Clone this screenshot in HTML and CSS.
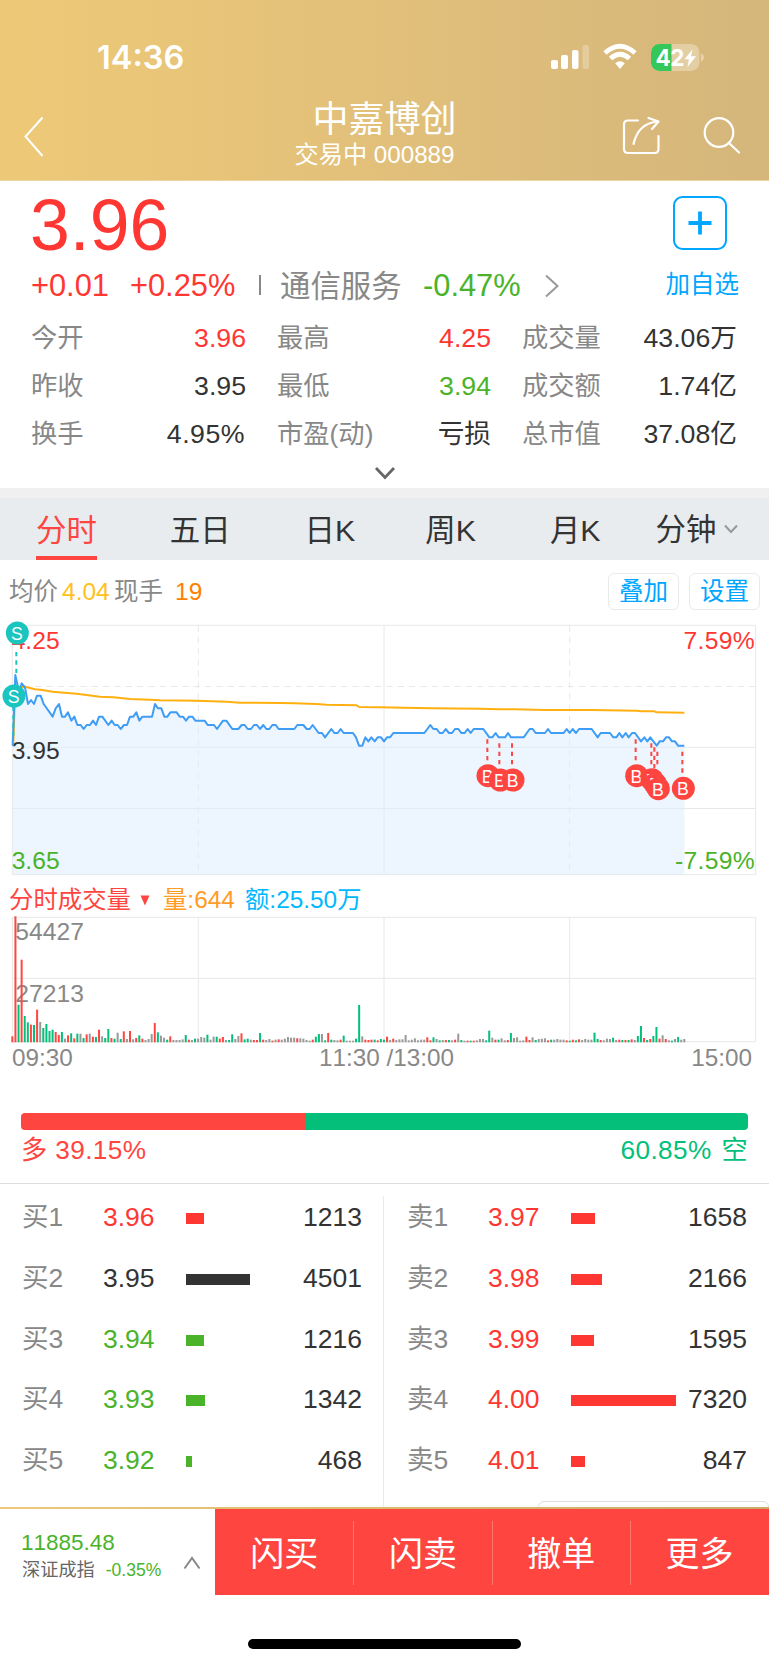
FILE: index.html
```html
<!DOCTYPE html>
<html lang="zh-CN">
<head>
<meta charset="utf-8">
<title>中嘉博创 000889</title>
<link rel="stylesheet" href="styles.css">
</head>
<body>
<header class="header">
  <div class="status">
    <span class="time">14:36</span>
    <svg class="status-icons" width="156" height="30" viewBox="0 0 156 30" fill="#fff">
      <rect x="2" y="17" width="7" height="9" rx="2"/>
      <rect x="12" y="12" width="7" height="14" rx="2"/>
      <rect x="23" y="7" width="6.5" height="19" rx="2"/>
      <rect x="33.500" y="2" width="6.500" height="24" rx="2" opacity=".25"/>
      <g fill="none" stroke="#fff" stroke-width="5">
        <path d="M56 10 Q71 -3.500 86 10"/>
        <path d="M61.500 15.500 Q71 7 80.500 15.500"/>
      </g>
      <path d="M66.200 20.300 Q71 16 75.800 20.300 L71 26z"/>
      <rect x="102" y="1" width="48.500" height="27" rx="8.500" opacity=".32"/>
      <path d="M110.500 1 H122.500 V28 H110.500 A8.500 8.500 0 0 1 102 19.500 V9.500 A8.500 8.500 0 0 1 110.500 1z" fill="#34c759"/>
      <path d="M152 10.500 q2.800 1 2.800 4 t-2.800 4z" opacity=".4"/>
      <text class="battery" x="106.500" y="22.500">42</text>
      <path d="M143.500 6.500 L135.500 16.200 H140 L138.500 24 L147 13.300 H142z"/>
    </svg>
  </div>
  <nav class="navbar">
    <svg class="back" width="20" height="42" viewBox="0 0 20 42"><path d="M18.500 1.500 L1.500 20.500 L18.500 40"/></svg>
    <div class="heading">
      <h1 class="name">中嘉博创</h1>
      <p class="code">交易中 000889</p>
    </div>
    <svg class="nav-icons" width="120" height="42" viewBox="0 0 120 42">
      <path d="M17 4.500 H7 Q3 4.500 3 8.500 V33 Q3 37 7 37 H33.500 Q37.500 37 37.500 33 V20"/>
      <path d="M12.500 28 C15 17 21 7 36.500 5.500 M27.500 2 L37.500 5.500 L31 13"/>
      <circle cx="98" cy="16.500" r="14.300"/>
      <path d="M108 27 L118 36.500"/>
    </svg>
  </nav>
</header>

<section class="quote">
  <div class="quote-top">
    <div class="price">3.96</div>
    <svg class="plus" width="54" height="54" viewBox="0 0 54 54"><rect x="1" y="1" width="52" height="52" rx="8.500" stroke-width="2"/><path d="M15.500 27 H38.500 M27 15.500 V38.500" stroke-width="3.800"/></svg>
  </div>
  <div class="change">
    <span class="delta">+0.01</span><span class="pct">+0.25%</span><i class="bar"></i><span class="sector">通信服务</span><span class="sector-pct">-0.47%</span>
    <svg class="more" width="16" height="24" viewBox="0 0 16 24"><path d="M2 1.500 L13.500 12 L2 22.500"/></svg>
    <a class="add">加自选</a>
  </div>
  <dl class="stats">
    <div><dt>今开</dt><dd class="up">3.96</dd></div>
    <div><dt>最高</dt><dd class="up">4.25</dd></div>
    <div><dt>成交量</dt><dd>43.06万</dd></div>
    <div><dt>昨收</dt><dd>3.95</dd></div>
    <div><dt>最低</dt><dd class="down">3.94</dd></div>
    <div><dt>成交额</dt><dd>1.74亿</dd></div>
    <div><dt>换手</dt><dd class="rate">4.95%</dd></div>
    <div><dt>市盈(动)</dt><dd>亏损</dd></div>
    <div><dt>总市值</dt><dd>37.08亿</dd></div>
  </dl>
  <svg class="expand" width="24" height="16" viewBox="0 0 24 16"><path d="M3 2 L12 11.500 L21 2"/></svg>
</section>

<nav class="tabs">
  <a class="tab active">分时</a><a class="tab">五日</a><a class="tab">日K</a><a class="tab">周K</a><a class="tab">月K</a>
  <a class="tab last">分钟<svg width="16" height="10" viewBox="0 0 16 10"><path d="M2 1.500 L8 8 L14 1.500"/></svg></a>
</nav>

<section class="info">
  <span class="grey">均价</span><span class="avg">4.04</span><span class="grey">现手</span><span class="hand">19</span>
  <button class="btn">叠加</button><button class="btn">设置</button>
</section>

<svg class="price-chart" width="769" height="266" viewBox="0 0 2307 798">
  <g class="grid">
    <path d="M37 46 H2267 V794 H37z M37 412 H2267 M37 595.500 H2267 M1152 46 V794"/>
    <path class="dashed" d="M37 229.500 H2267 M595 46 V794 M1709 46 V794"/>
  </g>
  <polygon id="area" class="area"/>
  <text class="label up" x="35" y="117">4.25</text>
  <text class="label up end" x="2265" y="117">7.59%</text>
  <text class="label" x="35" y="446">3.95</text>
  <text class="label down" x="35" y="777">3.65</text>
  <text class="label down end" x="2265" y="777">-7.59%</text>
  <polyline id="average" class="average"/>
  <polyline id="line" class="line"/>
  <g id="marks"></g>
</svg>

<section class="volume-title">
  <span class="vt">分时成交量</span><svg width="10" height="11" viewBox="0 0 10 11"><path d="M.5 .5 H9.500 L5 10.500z" fill="#ff4540"/></svg><span class="vq">量:644</span><span class="va">额:25.50万</span>
</section>
<svg class="volume-chart" width="769" height="128" viewBox="0 0 2307 384">
  <path class="grid" d="M37 4 H2267 V377 H37z M37 187 H2267 M595 4 V377 M1152 4 V377 M1709 4 V377"/>
  <text class="label vol" x="46" y="73">54427</text>
  <text class="label vol" x="46" y="257">27213</text>
  <g id="bars"></g>
</svg>
<div class="axis"><span>09:30</span><span class="mid">11:30 /13:00</span><span>15:00</span></div>

<section class="ratio">
  <div class="ratio-bar"><i class="long" style="width:39.15%"></i><i class="short"></i></div>
  <div class="ratio-text"><span class="long-text">多 39.15%</span><span class="short-text">60.85% 空</span></div>
</section>

<section class="book">
  <div class="side">
    <div class="row up"><span class="lv">买1</span><span>3.96</span><i style="width:18px"></i><b>1213</b></div>
    <div class="row"><span class="lv">买2</span><span>3.95</span><i style="width:64px"></i><b>4501</b></div>
    <div class="row down"><span class="lv">买3</span><span>3.94</span><i style="width:18px"></i><b>1216</b></div>
    <div class="row down"><span class="lv">买4</span><span>3.93</span><i style="width:19px"></i><b>1342</b></div>
    <div class="row down"><span class="lv">买5</span><span>3.92</span><i style="width:6px"></i><b>468</b></div>
  </div>
  <div class="side sell">
    <div class="row up"><span class="lv">卖1</span><span>3.97</span><i style="width:24px"></i><b>1658</b></div>
    <div class="row up"><span class="lv">卖2</span><span>3.98</span><i style="width:31px"></i><b>2166</b></div>
    <div class="row up"><span class="lv">卖3</span><span>3.99</span><i style="width:23px"></i><b>1595</b></div>
    <div class="row up"><span class="lv">卖4</span><span>4.00</span><i style="width:105px"></i><b>7320</b></div>
    <div class="row up"><span class="lv">卖5</span><span>4.01</span><i style="width:14px"></i><b>847</b></div>
  </div>
  <div class="sheet"></div>
</section>

<footer class="footer">
  <div class="index">
    <div>
      <div class="index-value">11885.48</div>
      <div class="index-name">深证成指<span>-0.35%</span></div>
    </div>
    <svg width="18" height="14" viewBox="0 0 18 14"><path d="M1.500 12.500 L9 2 L16.500 12.500"/></svg>
  </div>
  <div class="actions"><a>闪买</a><a>闪卖</a><a>撤单</a><a>更多</a></div>
</footer>
<div class="home"></div>
<script src="script.js"></script>
</body>
</html>
```
FILE: styles.css
```css
* { box-sizing: border-box; margin: 0; padding: 0; }
body {
  width: 769px; height: 1665px; overflow: hidden; background: #fff; color: #333;
  font-family: "Liberation Sans", "Noto Sans CJK SC", sans-serif;
  font-size: 26px; line-height: 32px; font-kerning: none; white-space: nowrap;
}
svg { display: block; flex: none; }
i { display: block; }
.up { color: #ff3733; fill: #ff3733; }
.down { color: #4ab32a; fill: #4ab32a; }

.header { height: 181px; background: linear-gradient(90deg, #edc977, #dfbe7b 60%, #d5b67b); color: #fff; border-bottom: 1px solid #ecd6a6; }
.status { height: 98px; padding: 43px 64px 0 97px; display: flex; justify-content: space-between; }
.time { font: 600 32.500px/30px Inter, sans-serif; letter-spacing: 0; }
.battery { font: 700 22.500px Inter, sans-serif; letter-spacing: -.5px; }
.navbar { display: grid; grid-template-columns: 150px 1fr 150px; height: 82px; }
.back { margin: 18px 0 0 24px; fill: none; stroke: #fff; stroke-width: 2; }
.heading { text-align: center; }
.name { font-size: 36px; line-height: 40px; font-weight: 400; padding-top: 2px; height: 42px; }
.code { font-size: 24.200px; line-height: 30px; padding-right: 20px; }
.nav-icons { margin: 18px 0 0 2px; fill: none; stroke: #fff; stroke-width: 2.200; stroke-linecap: round; stroke-linejoin: round; }

.quote { height: 307px; }
.quote-top { display: flex; justify-content: space-between; padding: 6px 42px 0 30px; height: 84px; }
.price { font-size: 71.500px; line-height: 76px; color: #ff3733; }
.plus { margin-top: 9px; fill: none; stroke: #00a6ff; }
.change { display: flex; align-items: center; height: 44px; padding: 0 30px 2px 31px; font-size: 30.800px; }
.delta { width: 99px; color: #ff3733; }
.pct { width: 129px; color: #ff3733; }
.change .bar { width: 2px; height: 20px; background: #888; margin-right: 19px; margin-top: -3px; }
.sector { width: 143px; font-size: 30.400px; color: #888; }
.sector-pct { width: 121px; color: #4ab32a; }
.more { fill: none; stroke: #999; stroke-width: 2; }
.add { margin-left: auto; font-size: 24.500px; color: #00a6ff; margin-top: -3px; }
.stats { display: grid; grid-template-columns: 215px 214px 215px; column-gap: 31px; padding: 5px 31px 0; grid-auto-rows: 48px; }
.stats div { display: flex; justify-content: space-between; align-items: center; }
dt { color: #888; font-size: 26.300px; }
dd { font-size: 26.700px; }
.rate { letter-spacing: .5px; padding-right: 1px; }
.expand { margin: 8px auto 0; fill: none; stroke: #666; stroke-width: 2.800; }

.tabs { height: 72px; border-top: 10px solid #f0f0f0; background: #e8ecee; display: flex; font-size: 30.400px; padding-left: 36px; }
.tab { line-height: 64px; margin-right: 73px; height: 62px; }
.tab:nth-child(2) { margin-right: 74px; }
.tab:nth-child(3) { margin-right: 70px; }
.tab:nth-child(4) { margin-right: 74px; }
.tab:nth-child(5) { margin-right: 55px; }
.tab.active { color: #ff4540; border-bottom: 4px solid #ff4540; }
.tab.last { display: flex; align-items: center; margin: 0; }
.tab svg { margin-left: 7px; fill: none; stroke: #999; stroke-width: 2; }

.info { display: flex; align-items: center; height: 62px; padding: 2px 9px 0; font-size: 24.500px; }
.grey { color: #888; width: 53px; }
.avg { color: #ffc21a; width: 52px; }
.hand { color: #ff8000; margin-left: 8px; margin-right: auto; }
.btn { font: inherit; line-height: 35px; color: #00a6ff; width: 71px; height: 37px; border: 1.500px solid #e8eaec; border-radius: 6px; background: #fff; margin: -2px 0 0 10px; }

.price-chart { margin-top: -12px; }
.grid { fill: none; stroke: #e8e8e8; stroke-width: 3; }
.dashed { stroke-dasharray: 19 15; }
.area { fill: #dbecfd; opacity: .5; }
.average, .line { fill: none; stroke-width: 6; stroke-linejoin: round; }
.average { stroke: #ffb010; }
.line { stroke: #3f9df5; }
.label { font-size: 74px; fill: #333; }
.label.up { fill: #ff3733; }
.label.down { fill: #4ab32a; }
.end { text-anchor: end; letter-spacing: 1px; }
.label.vol { fill: #888; }
.mark-text { font-size: 53px; fill: #fff; text-anchor: middle; }
.mark-line { stroke-width: 6; stroke-dasharray: 13 12; }

.volume-title { display: flex; align-items: center; height: 40px; padding: 8px 9px 0; font-size: 24.400px; }
.volume-title svg { margin: 0 13px 0 9px; }
.vt { color: #ff4540; }
.vq { color: #ff9c26; width: 82px; }
.va { color: #00b8ff; }
.axis { display: flex; justify-content: space-between; padding: 0 17px 0 12px; font-size: 24.300px; line-height: 28px; color: #888; }
.mid { margin-left: 9px; }

.ratio { height: 112px; padding: 41px 21px 0; border-bottom: 1px solid #ddd; }
.ratio-bar { display: flex; height: 17px; border-radius: 4px; overflow: hidden; }
.long { background: #ff4540; }
.short { background: #03bf7a; flex: 1; }
.ratio-text { display: flex; justify-content: space-between; padding-top: 4px; letter-spacing: .4px; font-size: 26.200px; }
.long-text { color: #ff4540; }
.short-text { color: #03bf7a; word-spacing: 2px; }

.book { height: 323px; display: grid; grid-template-columns: 384px 385px; padding-top: 12px; position: relative; overflow: hidden; }
.side { display: grid; grid-template-rows: repeat(5, 60.700px); padding: 0 22px; align-content: start; margin-top: -9px; font-size: 26.500px; }
.sell { padding-left: 23px; }
.book::before { content: ""; position: absolute; left: 383px; top: 12px; bottom: 0; width: 1px; background: #eaeaea; }
.row { display: grid; grid-template-columns: 81px 83px 108px 1fr; align-items: center; }
.row i { height: 11px; background: #333; margin-top: 3px; }
.row.up i { background: #ff3733; }
.row.down i { background: #4ab32a; }
.row b { font-weight: 400; text-align: right; color: #333; }
.row .lv { color: #888; }
.sheet { position: absolute; left: 538px; top: 317px; width: 231px; height: 20px; border: 1.500px solid #ddd; border-radius: 6px; background: #fff; }

.footer { height: 88px; display: flex; border-top: 2px solid; border-image: linear-gradient(90deg, #edc977, #c9aa6b) 1; }
.index { width: 215px; display: flex; padding: 20px 14px 0 21px; justify-content: space-between; }
.index svg { margin-top: 27px; fill: none; stroke: #888; stroke-width: 2; }
.index-value { font-size: 22.500px; line-height: 28px; color: #4ab32a; }
.index-name { font-size: 18.200px; line-height: 27px; color: #666; padding-left: 1px; }
.index-name span { font-size: 17.500px; color: #4ab32a; margin-left: 11px; }
.actions { flex: 1; display: grid; grid-template-columns: repeat(4, 138.300px); align-items: center; background: #ff4540; color: #fff; font-size: 34px; padding-top: 1px; }
.actions a { text-align: center; height: 64px; line-height: 67px; }
.actions a + a { border-left: 1px solid #ff7571; }
.home { width: 273px; height: 10px; margin: 44px auto 0; border-radius: 5px; background: #000; }
```
FILE: script.js
```js
// Both charts use three drawing units per CSS pixel.
const NS = "http://www.w3.org/2000/svg";
const byId = id => document.getElementById(id);

const price = [
  [0, "38,407 46,195 54,232 60,240 65,220 75,232 84,282 93,270 102,282 111,257 122,257 131,282 158,320 167,295 177,282 186,320 195,320 204,307 214,332 223,320 232,345 242,345 251,357 260,345 270,345 279,332 288,345 297,320 307,320 325,345 335,332 344,345 353,345 362,357 372,345 381,345 390,320 400,320 409,307 418,332 427,320 456,320 465,282 474,295 484,295 493,320 502,320 511,307 530,307 539,320 549,320 558,332 567,320 577,320 586,332 614,332 623,345 642,345 651,357 669,332 679,332 697,357 715,357 725,345 734,345 743,357"],
  [750, "3,357 12,345 21,345 30,357 40,345 49,357 58,357 67,345 77,345 86,357 133,357 142,345 160,345 170,357 179,357 188,345 206,369 216,369 225,382 244,357 253,369 263,369 272,357 281,369 309,369 318,382 327,407 337,407 346,382 355,394 364,382 374,394 383,382 393,382 402,394 411,382 420,382 430,369 523,369 541,345 550,357 560,357 569,369 578,369 587,357 597,369 606,369 615,357 625,357 634,369 644,369 653,357 662,369 671,357 700,357 718,382 727,382 737,369 746,382"],
  [1500, "15,382 24,369 33,382 71,382 89,357 98,357 107,369 135,369 144,357 153,369 191,369 200,357 209,369 218,357 228,369 237,357 275,357 293,382 302,369 330,369 340,382 349,382 358,369 367,382 377,369 386,382 396,369 405,369 423,394 433,382 442,394 451,382 470,407 479,394 489,394 498,382 507,382 516,394 525,394 534,407 553,407"]
];
const average = [
  [0, "40,395 46,232 75,230 105,238 122,239 158,245 230,251 300,260 340,262 390,267 450,269 480,271 590,272 680,275 720,278"],
  [750, "0,278 90,279 133,280 200,282 230,284 320,286 328,291 390,292 460,293 545,295 690,296"],
  [1500, "0,298 45,298 135,300 275,300 410,302 425,304 463,304 470,307 553,308"]
];
const join = parts => parts.map(([dx, s]) => s.split(" ").map(p => {
  const [x, y] = p.split(",").map(Number);
  return (x + dx) + "," + y;
}).join(" ")).join(" ");

byId("line").setAttribute("points", join(price));
byId("area").setAttribute("points", join(price) + " 2053,794 38,794");
byId("average").setAttribute("points", join(average));

function add(parent, tag, attrs, text) {
  const el = document.createElementNS(NS, tag);
  for (const k in attrs) el.setAttribute(k, attrs[k]);
  if (text) el.textContent = text;
  parent.appendChild(el);
}

// letter, centre x, centre y, connector x, connector top, connector bottom
const marks = [
  ["S", 42, 258, 40, 290, 377], ["S", 52, 69, 49, 126, 190],
  ["B", 1464, 497, 1462, 388, 452], ["B", 1501, 510, 1498, 400, 464], ["B", 1539, 510, 1536, 400, 464],
  ["B", 1910, 497, 1907, 388, 452], ["B", 1956, 509, 1954, 400, 464], ["B", 1966, 522, 1963, 412, 476],
  ["B", 1975, 536, 1972, 425, 464], ["B", 2050, 535, 2047, 425, 489]
];
marks.forEach(([t, x, y, lx, a, b]) => {
  const c = t === "S" ? "#1ac5c0" : "#ff4540";
  add(byId("marks"), "path", { class: "mark-line", d: `M${lx} ${a}V${b}`, stroke: c });
  add(byId("marks"), "circle", { cx: x, cy: y, r: 34.5, fill: c });
  add(byId("marks"), "text", { class: "mark-text", x: x - 1, y: y + 21 }, t);
});

// One entry per minute: colour code followed by the bar height.
const volume = "r18 r378 g113 r248 g79 g60 r53 g52 r98 k61 g43 g55 g34 g38 r31 r22 g31 k11 r21 g27 r12 g26 k26 g13 r24 k26 r17 g16 r38 k18 g13 g40 r13 g11 k29 g10 r33 k10 r34 k9 r13 g21 r11 k7 k10 k25 r58 g30 k20 k14 g8 r18 k7 k7 k7 k9 g22 r8 k7 g11 k11 k16 k14 g23 k8 k17 g17 r11 r16 k7 g7 g24 k10 k19 r27 g9 g11 k8 r7 r7 g28 r8 k7 k10 r5 k8 r9 k8 k11 k16 k14 k14 r12 k12 k11 k7 k5 r8 g17 g25 k25 g6 r28 g8 k7 k6 r8 g20 k5 k5 k5 g11 g112 k18 r8 r7 r8 g8 r6 g10 g8 r17 k7 r11 k7 k9 k9 k22 k6 k8 k12 k6 k8 k8 r15 r6 g15 k10 g6 k7 r7 g7 k6 r8 k26 g7 k5 r5 g5 r5 k6 k10 k10 g6 g35 k14 r8 g8 k12 k6 r7 g28 k13 k15 k5 k6 r17 r7 k15 g7 k10 k11 k12 r6 g8 k8 k10 k8 k8 r6 g5 r8 g6 r9 k7 k10 k8 k8 g29 g10 r7 k6 k11 k10 g14 k7 r8 g7 r7 g7 r9 k7 g19 g49 r13 g7 r10 g19 g46 r11 k21 r10 k6 g5 k10 g16 k8 k10";
const colors = { r: "#ff4540", g: "#03bf7a", k: "#999" };
volume.split(" ").forEach((v, i) => {
  const h = +v.slice(1);
  add(byId("bars"), "rect", { x: 34 + i * 9.29, y: 379 - h, width: 6, height: h, fill: colors[v[0]] });
});
```
